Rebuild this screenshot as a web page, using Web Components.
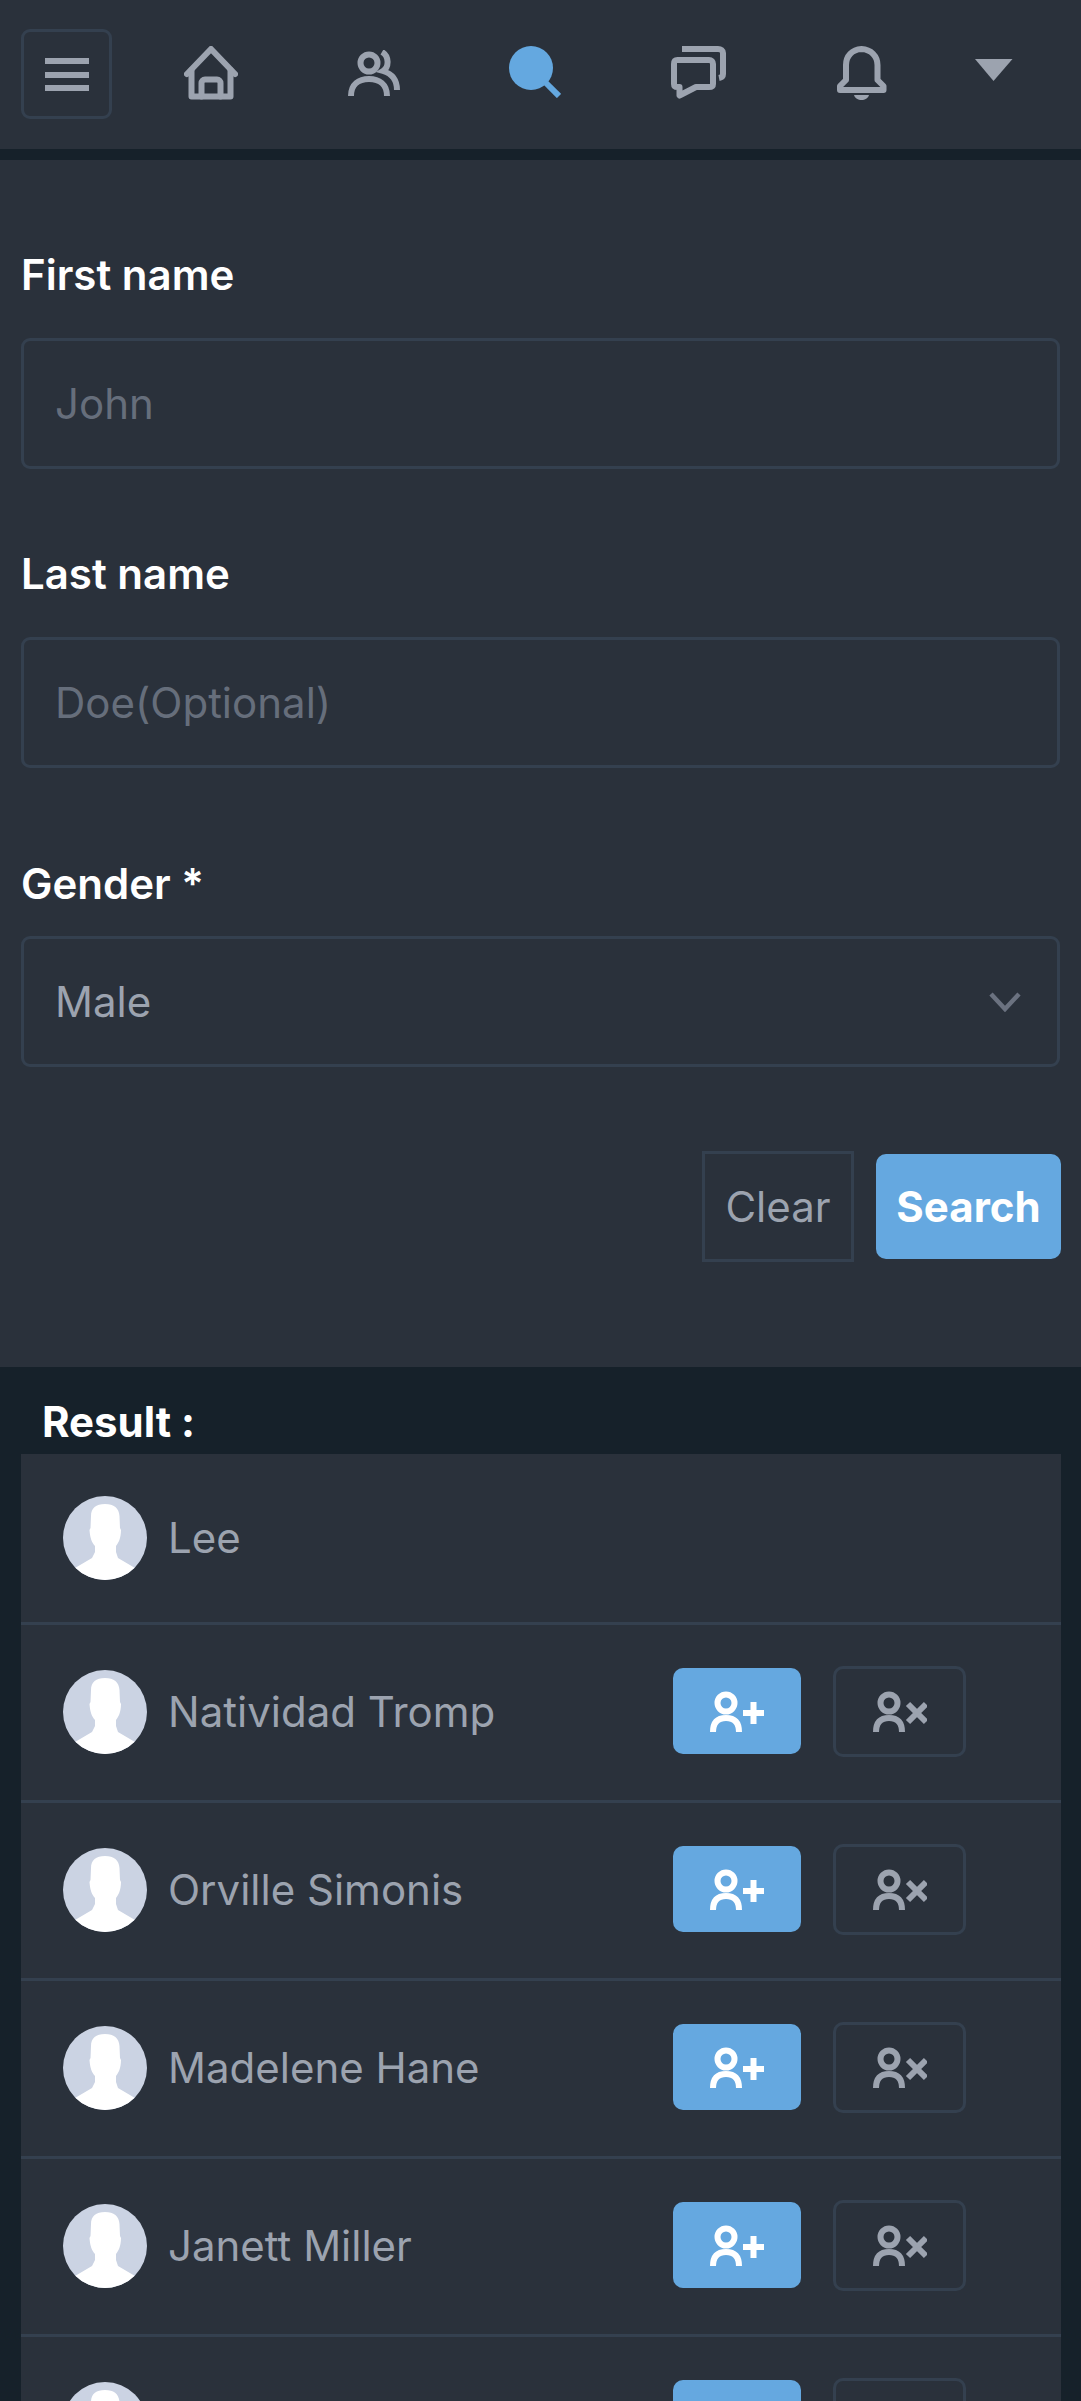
<!DOCTYPE html>
<html lang="en">
<head>
<meta charset="utf-8">
<title>Search</title>
<style>
html, body { margin: 0; height: 2401px; overflow: hidden; }
body { background: #16212a; font-family: Inter, "Liberation Sans", sans-serif; }
</style>
</head>
<body>
<top-nav></top-nav>
<search-form>
	<form-field label="First name" hint="John" style="--top: 89px"></form-field>
	<form-field label="Last name" hint="Doe(Optional)" style="--top: 79px"></form-field>
	<form-field label="Gender *" value="Male" select style="--top: 90px; --gap: 26px"></form-field>
</search-form>
<result-list>
	<result-row class="first">Lee</result-row>
	<result-row actions>Natividad Tromp</result-row>
	<result-row actions>Orville Simonis</result-row>
	<result-row actions>Madelene Hane</result-row>
	<result-row actions>Janett Miller</result-row>
	<result-row actions></result-row>
</result-list>

<script>
const navTemplate = document.createElement('template');
navTemplate.innerHTML = `
<style>
:host { display: block; background: #2a313b; border-bottom: 11px solid #16212a; }
nav { display: flex; align-items: center; height: 149px; padding: 0 0 3px 21px; box-sizing: border-box; }
.menu {
	width: 91px; height: 90px; margin: 0 18px -2px 0; box-sizing: border-box;
	border: 3px solid #34404f; border-radius: 9px;
	display: flex; align-items: center; justify-content: center;
}
.cell { width: 162.500px; display: flex; justify-content: center; }
svg { display: block; fill: none; stroke: #9ca3af; stroke-width: 6; }
.search { margin-bottom: 2px; position: relative; left: -1px; }
.bell { position: relative; left: 1px; }
.caret { width: 102px; margin-bottom: 6px; }
</style>
<nav>
	<div class="menu">
		<svg width="44" height="33" viewBox="45 57 44 33"><path d="M45 60H89M45 74H89M45 87H89"/></svg>
	</div>
	<div class="cell">
		<svg width="54" height="54" viewBox="184 47 54 54" stroke-linejoin="round" stroke-linecap="round"><path d="M187 75L211 50L235 75"/><path d="M191.500 71V97.500H230.500V71"/><path d="M201.500 97.500V84C201.500 82 203 80.500 205 80.500H217C219 80.500 220.500 82 220.500 84V97.500"/></svg>
	</div>
	<div class="cell">
		<svg width="52" height="46" viewBox="346 50 52 46"><circle cx="367" cy="63" r="8.500"/><path d="M349 96C349 84 357 79 367 79S385 84 385 96"/><path d="M380 52C387 56 387.500 67 381 71C391 74 395 81 395 90"/></svg>
	</div>
	<div class="cell search">
		<svg width="52" height="52" viewBox="509 46 52 52"><circle cx="531" cy="68" r="22" fill="#64a8e0" stroke="none"/><path d="M546 83L559 96" stroke="#64a8e0"/></svg>
	</div>
	<div class="cell">
		<svg width="55" height="54" viewBox="672 46 55 54" stroke-linejoin="round"><path d="M678.500 60H710C712.500 60 714 61.500 714 64V84C714 86 712.500 87 710 87H697L680.500 95.500V87H678.500C676 87 675 86 675 84V64C675 61.500 676 60 678.500 60Z"/><path d="M683 49H719C722 49 724 50.500 724 53V74C724 76 722.500 77.500 720 78"/></svg>
	</div>
	<div class="cell bell">
		<svg width="50" height="54" viewBox="837 46 50 54" stroke-linejoin="round"><path d="M861.500 49C852 49.500 846 56 846 65V80L840 86V90H883.500V86L877.500 80V65C877.500 56 871 49.500 861.500 49Z"/><path d="M854 95H869C868 98.500 865 100 861.500 100S855 98.500 854 95Z" fill="#9ca3af" stroke="none"/></svg>
	</div>
	<div class="cell caret">
		<svg width="38" height="22" viewBox="974.500 59 38 22"><path d="M974.500 59H1012L993 81Z" fill="#9ca3af" stroke="none"/></svg>
	</div>
</nav>`;

class TopNav extends HTMLElement {
	constructor() {
		super();
		this.attachShadow({ mode: 'open' }).appendChild(navTemplate.content.cloneNode(true));
	}
}

const formTemplate = document.createElement('template');
formTemplate.innerHTML = `
<style>
:host { display: block; background: #2a313b; padding: 0 20px 105px 21px; }
.actions { display: flex; justify-content: flex-end; align-items: center; gap: 22px; margin-top: 84px; }
.clear {
	width: 152px; height: 111px; box-sizing: border-box; border: 3px solid #34404f;
	display: flex; align-items: center; justify-content: center;
	color: #9ca3af; font-size: 42px; font-weight: 400;
}
.search {
	width: 185px; height: 105px; border-radius: 10px; background: #65a8e0;
	display: flex; align-items: center; justify-content: center;
	color: #fff; font-size: 42px; font-weight: 700;
}
</style>
<slot></slot>
<div class="actions">
	<div class="clear">Clear</div>
	<div class="search">Search</div>
</div>`;

class SearchForm extends HTMLElement {
	constructor() {
		super();
		this.attachShadow({ mode: 'open' }).appendChild(formTemplate.content.cloneNode(true));
	}
}

const fieldTemplate = document.createElement('template');
fieldTemplate.innerHTML = `
<style>
:host { display: block; padding-top: var(--top, 80px); }
.label { height: 52px; line-height: 52px; color: #fff; font-size: 42px; font-weight: 600; margin-bottom: var(--gap, 37px); }
.box {
	height: 131px; margin-right: 1px; box-sizing: border-box; padding: 0 31px;
	border: 3px solid #34404f; border-radius: 9px;
	display: flex; align-items: center; justify-content: space-between;
	font-size: 42px; color: #666e7b;
}
.box.filled { color: #9ca3af; }
svg { display: none; margin-right: 5px; fill: none; stroke: #6b7280; stroke-width: 4.500; }
.box.filled svg { display: block; }
</style>
<div class="label"></div>
<div class="box">
	<span class="text"></span>
	<svg width="32" height="20" viewBox="0 0 32 20"><path d="M2 2L16 17L30 2"/></svg>
</div>`;

class FormField extends HTMLElement {
	constructor() {
		super();
		this.attachShadow({ mode: 'open' }).appendChild(fieldTemplate.content.cloneNode(true));
	}
	connectedCallback() {
		this.shadowRoot.querySelector('.label').textContent = this.getAttribute('label');
		this.shadowRoot.querySelector('.text').textContent = this.getAttribute('value') || this.getAttribute('hint');
		if (this.hasAttribute('select')) this.shadowRoot.querySelector('.box').classList.add('filled');
	}
}

const listTemplate = document.createElement('template');
listTemplate.innerHTML = `
<style>
:host { display: block; padding: 30px 20px 0 21px; }
h2 { margin: 0 0 0 21px; height: 57px; line-height: 50px; color: #fff; font-size: 42px; font-weight: 700; }
</style>
<h2>Result :</h2>
<slot></slot>`;

class ResultList extends HTMLElement {
	constructor() {
		super();
		this.attachShadow({ mode: 'open' }).appendChild(listTemplate.content.cloneNode(true));
	}
}

const rowTemplate = document.createElement('template');
rowTemplate.innerHTML = `
<style>
:host {
	display: flex; align-items: center; gap: 21px; box-sizing: border-box;
	height: 178px; padding: 0 95px 2px 42px;
	background: #2a313b; border-bottom: 3px solid #34404f;
}
:host(.first) { height: 171px; padding-bottom: 0; }
:host(.first) .name { margin-bottom: 2px; }
.name { flex: 1; color: #9ca3af; font-size: 42px; font-weight: 400; }
.buttons { display: flex; align-items: center; gap: 32px; margin-bottom: 1px; }
</style>
<user-avatar></user-avatar>
<span class="name"><slot></slot></span>
<div class="buttons"></div>`;

class ResultRow extends HTMLElement {
	constructor() {
		super();
		this.attachShadow({ mode: 'open' }).appendChild(rowTemplate.content.cloneNode(true));
	}
	connectedCallback() {
		if (!this.hasAttribute('actions')) return;
		const buttons = this.shadowRoot.querySelector('.buttons');
		buttons.appendChild(document.createElement('add-button'));
		buttons.appendChild(document.createElement('reject-button'));
	}
}

const avatarTemplate = document.createElement('template');
avatarTemplate.innerHTML = `
<style>
:host { display: block; width: 84px; height: 84px; border-radius: 50%; overflow: hidden; background: #cbd3e3; flex: none; }
svg { display: block; }
</style>
<svg width="84" height="84" viewBox="0 0 84 84"><path fill="#fff" d="M42 8C33 8 28 12 28 20L27.500 32L26.500 34C27 42 29 47 32 50V56L29 62L12 72V84H72V72L55 62L53 56V50C55.500 47 58 42 58 34L57 32L56.500 20C56 12 51 8 42 8Z"/></svg>`;

class UserAvatar extends HTMLElement {
	constructor() {
		super();
		this.attachShadow({ mode: 'open' }).appendChild(avatarTemplate.content.cloneNode(true));
	}
}

const addTemplate = document.createElement('template');
addTemplate.innerHTML = `
<style>
:host { display: flex; align-items: center; justify-content: center; width: 128px; height: 86px; border-radius: 10px; background: #65a8e0; }
svg { display: block; fill: none; stroke: #fff; stroke-width: 6; }
</style>
<svg width="54" height="41" viewBox="710 1689 54 41"><circle cx="726" cy="1701" r="8.500"/><path d="M713 1730C713 1720 718 1716 726 1716S739 1720 739 1730"/><path d="M743 1711H764M753.500 1700V1722"/></svg>`;

class AddButton extends HTMLElement {
	constructor() {
		super();
		this.attachShadow({ mode: 'open' }).appendChild(addTemplate.content.cloneNode(true));
	}
}

const rejectTemplate = document.createElement('template');
rejectTemplate.innerHTML = `
<style>
:host { display: flex; align-items: center; justify-content: center; width: 133px; height: 91px; box-sizing: border-box; border: 3px solid #34404f; border-radius: 10px; }
svg { display: block; fill: none; stroke: #9ca3af; stroke-width: 6; }
</style>
<svg width="54" height="41" viewBox="872 1690 54 41"><circle cx="888" cy="1702" r="8.500"/><path d="M875 1731C875 1721 880 1717 888 1717S901 1721 901 1731"/><path d="M907 1703L925 1721M925 1703L907 1721"/></svg>`;

class RejectButton extends HTMLElement {
	constructor() {
		super();
		this.attachShadow({ mode: 'open' }).appendChild(rejectTemplate.content.cloneNode(true));
	}
}

customElements.define('top-nav', TopNav);
customElements.define('search-form', SearchForm);
customElements.define('form-field', FormField);
customElements.define('result-list', ResultList);
customElements.define('result-row', ResultRow);
customElements.define('user-avatar', UserAvatar);
customElements.define('add-button', AddButton);
customElements.define('reject-button', RejectButton);
</script>
</body>
</html>
